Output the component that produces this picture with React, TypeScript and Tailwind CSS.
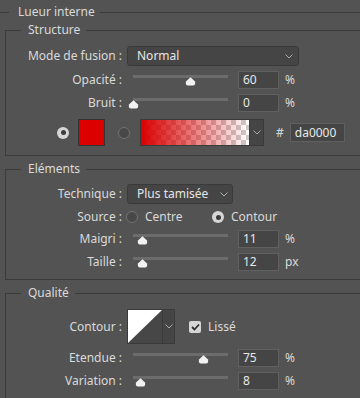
import React from "react";
import clsx from "clsx";

// Photoshop style "Lueur interne" layer style panel

const Chevron = () => (
  <svg width="8" height="5" viewBox="0 0 8 5">
    <path d="M0.5 0.5 L4 4 L7.5 0.5" fill="none" stroke="#a9a9a9" strokeWidth="1" />
  </svg>
);

const Thumb = () => (
  <svg width="11" height="9" viewBox="0 0 11 9">
    <path d="M5.5 0.3 L10 4.6 Q10.8 8.6 8 8.6 L3 8.6 Q0.2 8.6 1 4.6 Z" fill="#f2f2f2" />
  </svg>
);

const Radio = ({ checked }: { checked?: boolean }) =>
  checked ? (
    <div className="flex h-[12px] w-[12px] shrink-0 items-center justify-center rounded-full bg-[#d6d6d6]">
      <div className="h-[5px] w-[5px] rounded-full bg-[#3c3c3c]" />
    </div>
  ) : (
    <div className="h-[12px] w-[12px] shrink-0 rounded-full border border-[#727272] bg-[#484848]" />
  );

const Label = ({ children }: { children: React.ReactNode }) => (
  <div className="w-[116px] shrink-0 text-right">{children}</div>
);

interface SliderRowProps {
  label: string;
  pct: number;
  value: string;
  unit: string;
  className?: string;
}

const SliderRow: React.FC<SliderRowProps> = ({ label, pct, value, unit, className }) => (
  <div className={clsx("flex h-[18px] items-center", className)}>
    <Label>{label}</Label>
    <div className="relative ml-[11px] h-[18px] w-[95px]">
      <div className="absolute left-0 right-0 top-[4px] h-[3px] bg-[#6c6c6c]" />
      <div className="absolute top-[6px] leading-none" style={{ left: `${pct * 95 - 5.5}px` }}>
        <Thumb />
      </div>
    </div>
    <div className="ml-[10px] h-[18px] w-[41px] border border-[#606060] bg-[#454545] pl-[4px] leading-[16px] text-[#e8e8e8]">
      {value}
    </div>
    <span className="ml-[6px]">{unit}</span>
  </div>
);

const Section = ({
  title,
  className,
  children,
}: {
  title: string;
  className?: string;
  children: React.ReactNode;
}) => (
  <fieldset className={clsx("ml-[5px] w-[400px] border-l border-t border-b border-[#3b3b3b]", className)}>
    <legend className="ml-[15px] pl-[7px] pr-[6px] leading-[14px]">{title}</legend>
    {children}
  </fieldset>
);

const GradientSwatch = () => (
  <svg width="108" height="27" viewBox="0 0 108 27">
    <defs>
      <pattern id="checker" width="10" height="10" patternUnits="userSpaceOnUse">
        <rect width="10" height="10" fill="#ffffff" />
        <rect width="5" height="5" fill="#cccccc" />
        <rect x="5" y="5" width="5" height="5" fill="#cccccc" />
      </pattern>
      <linearGradient id="redFade" x1="0" y1="0" x2="1" y2="0">
        <stop offset="0" stopColor="#da0000" stopOpacity="1" />
        <stop offset="1" stopColor="#da0000" stopOpacity="0" />
      </linearGradient>
    </defs>
    <rect width="108" height="27" fill="url(#checker)" />
    <rect width="108" height="27" fill="url(#redFade)" />
  </svg>
);

const CurveThumb = () => (
  <svg width="34" height="33" viewBox="0 0 34 33">
    <rect width="34" height="33" fill="#474747" />
    <polygon points="0,0 34,0 0,33" fill="#ffffff" />
  </svg>
);

export default function App() {
  return (
    <div className="h-[398px] w-[360px] overflow-hidden bg-[#535353] text-[12px] text-[#dadada] font-['Noto_Sans',sans-serif]">
      <fieldset className="mt-[5px] w-[420px] border-t border-[#3b3b3b]">
        <legend className="ml-[9px] pl-[9px] pr-[5px] leading-[14px]">Lueur interne</legend>

        {/* Structure */}
        <Section title="Structure" className="mt-[4px] pb-[9px]">
          <div className="mt-[9px] flex h-[20px] items-center">
            <Label>Mode de fusion :</Label>
            <div className="ml-[5px] flex h-[20px] w-[172px] items-center justify-between rounded-[3px] border border-[#3a3a3a] bg-[#454545] pl-[9px] pr-[5px] text-[#e6e6e6]">
              <span>Normal</span>
              <Chevron />
            </div>
          </div>
          <SliderRow label="Opacité :" pct={0.6} value="60" unit="%" className="mt-[5px]" />
          <SliderRow label="Bruit :" pct={0} value="0" unit="%" className="mt-[5px]" />
          <div className="mt-[7px] flex h-[27px] items-center">
            <div className="ml-[51px]">
              <Radio checked />
            </div>
            <div className="ml-[9px] h-[27px] w-[27px] border border-[#333333] bg-[#dd0000]" />
            <div className="ml-[13px]">
              <Radio />
            </div>
            <div className="ml-[10px] flex h-[27px] border border-[#3a3a3a]">
              <div className="overflow-hidden leading-none">
                <GradientSwatch />
              </div>
              <div className="flex w-[14px] items-center justify-center border-l border-[#3a3a3a] bg-[#454545]">
                <Chevron />
              </div>
            </div>
            <span className="ml-[12px]">#</span>
            <div className="ml-[6px] h-[19px] w-[55px] border border-[#606060] bg-[#454545] pl-[4px] leading-[17px] text-[#e8e8e8]">
              da0000
            </div>
          </div>
        </Section>

        {/* Eléments */}
        <Section title="Eléments" className="mt-[6px] pb-[8px]">
          <div className="mt-[8px] flex h-[20px] items-center">
            <Label>Technique :</Label>
            <div className="ml-[5px] flex h-[20px] w-[106px] items-center justify-between rounded-[3px] border border-[#3a3a3a] bg-[#454545] pl-[9px] pr-[4px] text-[#e6e6e6]">
              <span>Plus tamisée</span>
              <Chevron />
            </div>
          </div>
          <div className="mt-[4px] flex h-[18px] items-center">
            <Label>Source :</Label>
            <div className="ml-[4px] flex w-[86px] items-center">
              <Radio />
              <span className="ml-[7px]">Centre</span>
            </div>
            <Radio checked />
            <span className="ml-[7px]">Contour</span>
          </div>
          <SliderRow label="Maigri :" pct={0.105} value="11" unit="%" className="mt-[4px]" />
          <SliderRow label="Taille :" pct={0.105} value="12" unit="px" className="mt-[5px]" />
        </Section>

        {/* Qualité */}
        <Section title="Qualité" className="mt-[6px] pb-[20px]">
          <div className="mt-[9px] flex h-[35px] items-center">
            <Label>Contour :</Label>
            <div className="ml-[5px] flex h-[35px] border border-[#3a3a3a]">
              <div className="leading-none">
                <CurveThumb />
              </div>
              <div className="flex w-[12px] items-center justify-center border-l border-[#3a3a3a] bg-[#454545]">
                <Chevron />
              </div>
            </div>
            <div className="ml-[14px] flex h-[12px] w-[12px] items-center justify-center rounded-[2px] bg-[#d6d6d6]">
              <svg width="9" height="8" viewBox="0 0 9 8">
                <path d="M1 4 L3.5 6.5 L8 1.5" fill="none" stroke="#2e2e2e" strokeWidth="1.8" />
              </svg>
            </div>
            <span className="ml-[7px]">Lissé</span>
          </div>
          <SliderRow label="Etendue :" pct={0.74} value="75" unit="%" className="mt-[5px]" />
          <SliderRow label="Variation :" pct={0.074} value="8" unit="%" className="mt-[5px]" />
        </Section>
      </fieldset>
    </div>
  );
}
